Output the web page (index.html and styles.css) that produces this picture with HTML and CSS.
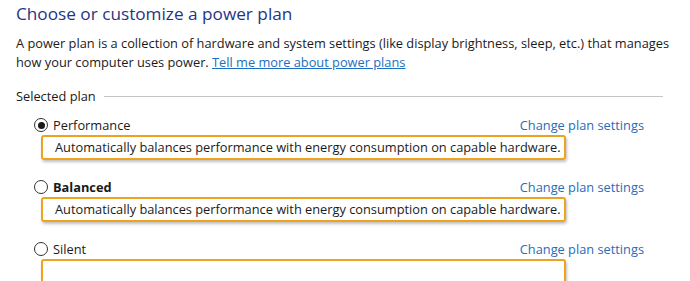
FILE: index.html
```html
<!DOCTYPE html>
<html>
<head>
    <title>Power Options</title>
    <link rel="stylesheet" href="styles.css">
</head>
<body>
    <h1 class="title">Choose or customize a power plan</h1>
    <p class="intro">
        A power plan is a collection of hardware and system settings (like display brightness, sleep, etc.) that manages<br>
        how your computer uses power. <a href="#" class="link">Tell me more about power plans</a>
    </p>

    <div class="group-head">
        <span>Selected plan</span>
        <div class="group-line"></div>
    </div>

    <div class="plan">
        <div class="plan-row">
            <label class="radio-label"><span class="radio checked"></span>Performance</label>
            <a href="#" class="plan-link">Change plan settings</a>
        </div>
        <div class="plan-desc">Automatically balances performance with energy consumption on capable hardware.</div>
    </div>

    <div class="plan">
        <div class="plan-row">
            <label class="radio-label bold"><span class="radio"></span>Balanced</label>
            <a href="#" class="plan-link">Change plan settings</a>
        </div>
        <div class="plan-desc">Automatically balances performance with energy consumption on capable hardware.</div>
    </div>

    <div class="plan">
        <div class="plan-row">
            <label class="radio-label"><span class="radio"></span>Silent</label>
            <a href="#" class="plan-link">Change plan settings</a>
        </div>
        <div class="plan-desc"></div>
    </div>
</body>
</html>
```
FILE: styles.css
```css
body {
    margin: 0;
    padding: 0 0 0 16px;
    font-family: "Open Sans", "Noto Sans", sans-serif;
    font-size: 12.8px;
    color: #1a1a1a;
    background: #ffffff;
    overflow: hidden;
}

.title {
    font-size: 17.2px;
    font-weight: normal;
    color: #1f3584;
    margin: 2px 0 0 0;
    line-height: 24px;
}

.intro {
    margin: 8px 0 0 0;
    line-height: 19px;
    white-space: nowrap;
}

.link {
    color: #1a6fc4;
}

.group-head {
    display: flex;
    align-items: center;
    margin-top: 15px;
    width: 647px;
    line-height: 18px;
}

.group-line {
    flex: 1;
    height: 1px;
    background: #c4c4c4;
    margin-left: 8px;
}

.plan {
    margin-left: 18px;
    width: 610px;
    margin-top: 10px;
}

.plan + .plan {
    margin-top: 17px;
}

.plan-row {
    display: flex;
    justify-content: space-between;
    align-items: center;
    height: 20px;
}

.radio-label {
    display: flex;
    align-items: center;
}

.radio-label.bold {
    font-weight: bold;
}

.radio {
    width: 12px;
    height: 12px;
    border: 1px solid #333;
    border-radius: 50%;
    margin-right: 5px;
    position: relative;
}

.radio.checked::after {
    content: "";
    position: absolute;
    left: 2.5px;
    top: 2.5px;
    width: 7px;
    height: 7px;
    border-radius: 50%;
    background: #1a1a1a;
}

.plan-link {
    color: #2a6bb8;
    text-decoration: none;
}

.plan-desc {
    margin-left: 7px;
    width: 509px;
    height: 21px;
    line-height: 21px;
    padding-left: 12px;
    border: 2px solid #eda220;
    border-radius: 3px;
    box-shadow: 1px 2px 3px rgba(0, 0, 0, 0.25);
}
```
